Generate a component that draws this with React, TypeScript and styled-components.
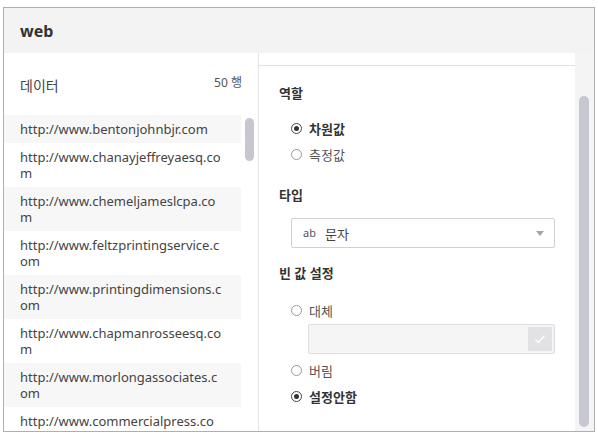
import React from "react";
import styled, { createGlobalStyle } from "styled-components";

const Global = createGlobalStyle`
  html, body { margin: 0; padding: 0; background: #fff; }
  body { font-family: "Noto Sans", "Noto Sans CJK KR", sans-serif; color: #333; }
  * { box-sizing: border-box; }
`;

const Frame = styled.div`
  margin: 7px 0 0 3px;
  width: 592px;
  height: 425px;
  border: 1px solid #aeaeb4;
  display: flex;
  flex-direction: column;
  overflow: hidden;
`;

const Header = styled.div`
  height: 45px;
  flex: none;
  background: #f3f3f3;
  display: flex;
  align-items: center;
  padding-left: 16px;
  font-size: 16px;
  font-weight: 700;
  color: #333;
`;

const Body = styled.div`
  flex: 1;
  display: flex;
  min-height: 0;
`;

const LeftPanel = styled.div`
  width: 255px;
  flex: none;
  display: flex;
  flex-direction: column;
  border-right: 1px solid #e4e4e4;
  background: #fff;
`;

const LeftHead = styled.div`
  height: 62px;
  flex: none;
  display: flex;
  align-items: center;
  justify-content: space-between;
  padding: 2px 16px 0 16px;
`;

const LeftTitle = styled.span`
  font-size: 14px;
  color: #444;
`;

const RowCount = styled.span`
  font-size: 12px;
  color: #555;
  margin-top: -6px;
`;

const ListWrap = styled.div`
  flex: 1;
  display: flex;
  min-height: 0;
  overflow: hidden;
`;

const List = styled.div`
  width: 237px;
  flex: none;
  display: flex;
  flex-direction: column;
`;

const Row = styled.div<{ $alt: boolean }>`
  padding: 6px 18px 6px 16px;
  line-height: 16px;
  font-size: 13px;
  color: #444;
  word-break: break-all;
  background: ${(p) => (p.$alt ? "#f7f7f7" : "#fff")};
`;

const Track = styled.div<{ $bg: string; $w: number }>`
  width: ${(p) => p.$w}px;
  flex: none;
  background: ${(p) => p.$bg};
  display: flex;
  flex-direction: column;
`;

const Thumb = styled.div<{ $top: number; $h: number; $w: number }>`
  margin: ${(p) => p.$top}px 0 0 4px;
  width: ${(p) => p.$w}px;
  height: ${(p) => p.$h}px;
  border-radius: 5px;
  background: #c7c7d1;
`;

const RightPanel = styled.div`
  flex: 1;
  display: flex;
  min-width: 0;
`;

const Content = styled.div`
  flex: 1;
  display: flex;
  flex-direction: column;
  background: #fff;
`;

const TopStrip = styled.div`
  height: 13px;
  flex: none;
  border-bottom: 1px solid #e2e2e2;
`;

const Form = styled.div`
  display: flex;
  flex-direction: column;
  padding: 17px 20px 0 20px;
`;

const SectionTitle = styled.div<{ $mt: number }>`
  margin-top: ${(p) => p.$mt}px;
  font-size: 13px;
  line-height: 20px;
  font-weight: 700;
  color: #333;
`;

const Option = styled.div<{ $mt: number; $on: boolean }>`
  margin: ${(p) => p.$mt}px 0 0 12px;
  height: 26px;
  display: flex;
  align-items: center;
  gap: 7px;
  font-size: 13px;
  font-weight: ${(p) => (p.$on ? 700 : 400)};
  color: ${(p) => (p.$on ? "#333" : "#555")};
`;

const Radio = styled.span<{ $on: boolean }>`
  width: 11px;
  height: 11px;
  border-radius: 50%;
  border: 1px solid ${(p) => (p.$on ? "#444" : "#9a9a9a")};
  display: flex;
  align-items: center;
  justify-content: center;
  flex: none;
  &::after {
    content: "";
    width: 5px;
    height: 5px;
    border-radius: 50%;
    background: ${(p) => (p.$on ? "#333" : "transparent")};
  }
`;

const Select = styled.div`
  margin: 13px 0 0 12px;
  height: 30px;
  border: 1px solid #cfcfd4;
  border-radius: 2px;
  display: flex;
  align-items: center;
  padding: 0 10px 0 11px;
  font-size: 13px;
  color: #444;
`;

const TypeTag = styled.span`
  font-size: 11px;
  color: #555;
  margin-right: 9px;
  margin-top: -2px;
`;

const Caret = styled.span`
  margin-left: auto;
  width: 0;
  height: 0;
  border-left: 4px solid transparent;
  border-right: 4px solid transparent;
  border-top: 5px solid #a4a4ac;
`;

const InputBox = styled.div`
  margin: 1px 0 0 29px;
  height: 30px;
  border: 1px solid #dedee2;
  border-radius: 2px;
  background: #f5f5f5;
  display: flex;
  align-items: center;
  justify-content: flex-end;
  padding-right: 2px;
`;

const CheckBtn = styled.div`
  width: 24px;
  height: 24px;
  background: #e2e2e4;
  display: flex;
  align-items: center;
  justify-content: center;
`;

const urls = [
  "http://www.bentonjohnbjr.com",
  "http://www.chanayjeffreyaesq.com",
  "http://www.chemeljameslcpa.com",
  "http://www.feltzprintingservice.com",
  "http://www.printingdimensions.com",
  "http://www.chapmanrosseesq.com",
  "http://www.morlongassociates.com",
  "http://www.commercialpress.com",
];

export default function App() {
  return (
    <>
      <Global />
      <Frame>
        <Header>web</Header>
        <Body>
          <LeftPanel>
            <LeftHead>
              <LeftTitle>데이터</LeftTitle>
              <RowCount>50 행</RowCount>
            </LeftHead>
            <ListWrap>
              <List>
                {urls.map((u, i) => (
                  <Row key={u} $alt={i % 2 === 0}>
                    {u}
                  </Row>
                ))}
              </List>
              <Track $bg="#fff" $w={18}>
                <Thumb $top={3} $h={43} $w={9} />
              </Track>
            </ListWrap>
          </LeftPanel>
          <RightPanel>
            <Content>
              <TopStrip />
              <Form>
                <SectionTitle $mt={0}>역할</SectionTitle>
                <Option $mt={12} $on>
                  <Radio $on />
                  차원값
                </Option>
                <Option $mt={0} $on={false}>
                  <Radio $on={false} />
                  측정값
                </Option>
                <SectionTitle $mt={18}>타입</SectionTitle>
                <Select>
                  <TypeTag>ab</TypeTag>
                  문자
                  <Caret />
                </Select>
                <SectionTitle $mt={15}>빈 값 설정</SectionTitle>
                <Option $mt={14} $on={false}>
                  <Radio $on={false} />
                  대체
                </Option>
                <InputBox>
                  <CheckBtn>
                    <svg width="14" height="14" viewBox="0 0 14 14">
                      <polyline
                        points="2.5,7.5 5.5,10.5 11.5,3.5"
                        fill="none"
                        stroke="#fff"
                        strokeWidth="1.4"
                      />
                    </svg>
                  </CheckBtn>
                </InputBox>
                <Option $mt={3} $on={false}>
                  <Radio $on={false} />
                  버림
                </Option>
                <Option $mt={0} $on>
                  <Radio $on />
                  설정안함
                </Option>
              </Form>
            </Content>
            <Track $bg="#f4f4f4" $w={19}>
              <Thumb $top={43} $h={331} $w={10} />
            </Track>
          </RightPanel>
        </Body>
      </Frame>
    </>
  );
}
